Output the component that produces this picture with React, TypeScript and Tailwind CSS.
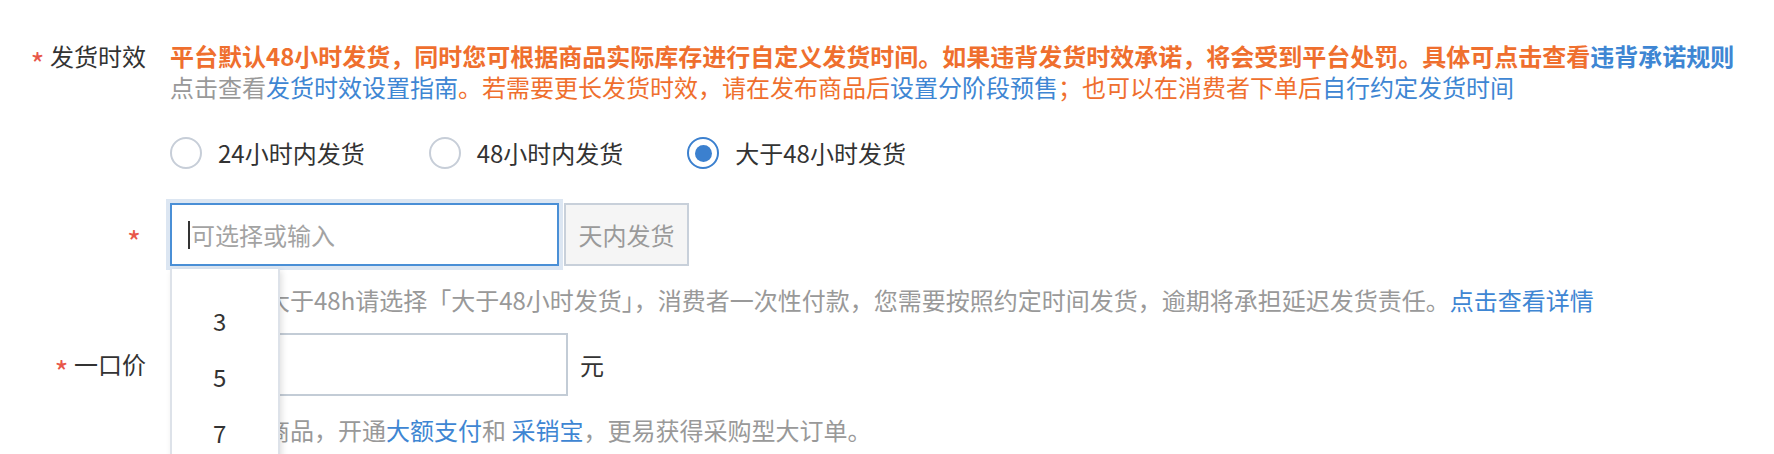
import React from "react";

function Radio({ checked, label }: { checked?: boolean; label: string }) {
  return (
    <div className="flex items-center">
      <span
        className={
          checked
            ? "flex h-[32px] w-[32px] items-center justify-center rounded-full border-2 border-[#3b80cf] bg-white"
            : "h-[32px] w-[32px] rounded-full border-2 border-[#c7ced8] bg-white"
        }
      >
        {checked ? <span className="h-[17px] w-[17px] rounded-full bg-[#3b80cf]" /> : null}
      </span>
      <span className="ml-[16px] leading-[32px] text-[#333]">{label}</span>
    </div>
  );
}

function Star() {
  return (
    <span className="inline-block align-[-10px] text-[30px] leading-[20px] text-[#e8574a]">
      *
    </span>
  );
}

export default function App() {
  const orange = "text-[#ef6f2e]";
  const blue = "text-[#3e86d3]";
  return (
    <div className="h-[454px] w-[1774px] overflow-hidden bg-white font-['Noto_Sans_CJK_SC','Noto_Sans',sans-serif] text-[24px] text-[#333]">
      <div className="pt-[40px]">
        {/* Row 1: 发货时效 */}
        <div className="flex">
          <div className="w-[146px] shrink-0 whitespace-nowrap text-right leading-[31px] text-[#333]">
            <Star /> 发货时效
          </div>
          <div className="ml-[24px]">
            <div className={`whitespace-nowrap font-bold leading-[31px] ${orange}`}>
              平台默认48小时发货，同时您可根据商品实际库存进行自定义发货时间。如果违背发货时效承诺，将会受到平台处罚。具体可点击查看
              <span className={blue}>违背承诺规则</span>
            </div>
            <div className="whitespace-nowrap leading-[31px]">
              <span className="text-[#999]">点击查看</span>
              <span className={blue}>发货时效设置指南</span>
              <span className={orange}>。若需要更长发货时效，请在发布商品后</span>
              <span className={blue}>设置分阶段预售</span>
              <span className={orange}>；也可以在消费者下单后</span>
              <span className={blue}>自行约定发货时间</span>
            </div>
            <div className="mt-[35px] flex items-center gap-[64px]">
              <Radio label="24小时内发货" />
              <Radio label="48小时内发货" />
              <Radio checked label="大于48小时发货" />
            </div>
          </div>
        </div>

        {/* Row 2: custom days input */}
        <div className="mt-[34px] flex items-center">
          <div className="w-[146px] shrink-0 pr-[5px] text-right leading-[31px]">
            <Star />
          </div>
          <div className="relative ml-[24px] flex">
            <div className="flex h-[63px] w-[389px] items-center border-2 border-[#4a8fd6] bg-white pl-[16px] shadow-[0_0_0_4px_#dce6f2]">
              <span className="mr-[1px] h-[28px] w-[2px] bg-[#333]" />
              <span className="leading-[31px] text-[#a3a3a3]">可选择或输入</span>
            </div>
            <div className="ml-[5px] flex h-[63px] w-[125px] items-center justify-center border-2 border-[#c8d0da] bg-[#f5f5f5] text-[#9a9a9a]">
              天内发货
            </div>
            {/* Dropdown */}
            <div className="absolute left-0 top-[66px] z-10 h-[200px] w-[110px] border-x-2 border-[#dde2e9] bg-white pt-[24px] shadow-[2px_2px_6px_rgba(0,0,0,0.12)]">
              {["3", "5", "7"].map((n) => (
                <div key={n} className="flex h-[56px] items-center pl-[41px] text-[#333]">
                  {n}
                </div>
              ))}
            </div>
          </div>
        </div>

        {/* Help 1 */}
        <div className="ml-[170px] mt-[18px] whitespace-nowrap leading-[31px] text-[#999]">
          发货时间大于48h请选择「大于48小时发货」，消费者一次性付款，您需要按照约定时间发货，逾期将承担延迟发货责任。
          <span className={blue}>点击查看详情</span>
        </div>

        {/* Row 3: 一口价 */}
        <div className="mt-[18px] flex items-center">
          <div className="w-[146px] shrink-0 whitespace-nowrap text-right leading-[31px]">
            <Star /> 一口价
          </div>
          <div className="ml-[24px] flex items-center">
            <div className="h-[63px] w-[398px] border-2 border-[#c3ccd6] bg-white" />
            <span className="ml-[12px] text-[#333]">元</span>
          </div>
        </div>

        {/* Help 2 */}
        <div className="ml-[170px] mt-[18px] whitespace-nowrap leading-[31px] text-[#999]">
          若为批发商品，开通<span className={blue}>大额支付</span>和 <span className={blue}>采销宝</span>，更易获得采购型大订单。
        </div>
      </div>
    </div>
  );
}
